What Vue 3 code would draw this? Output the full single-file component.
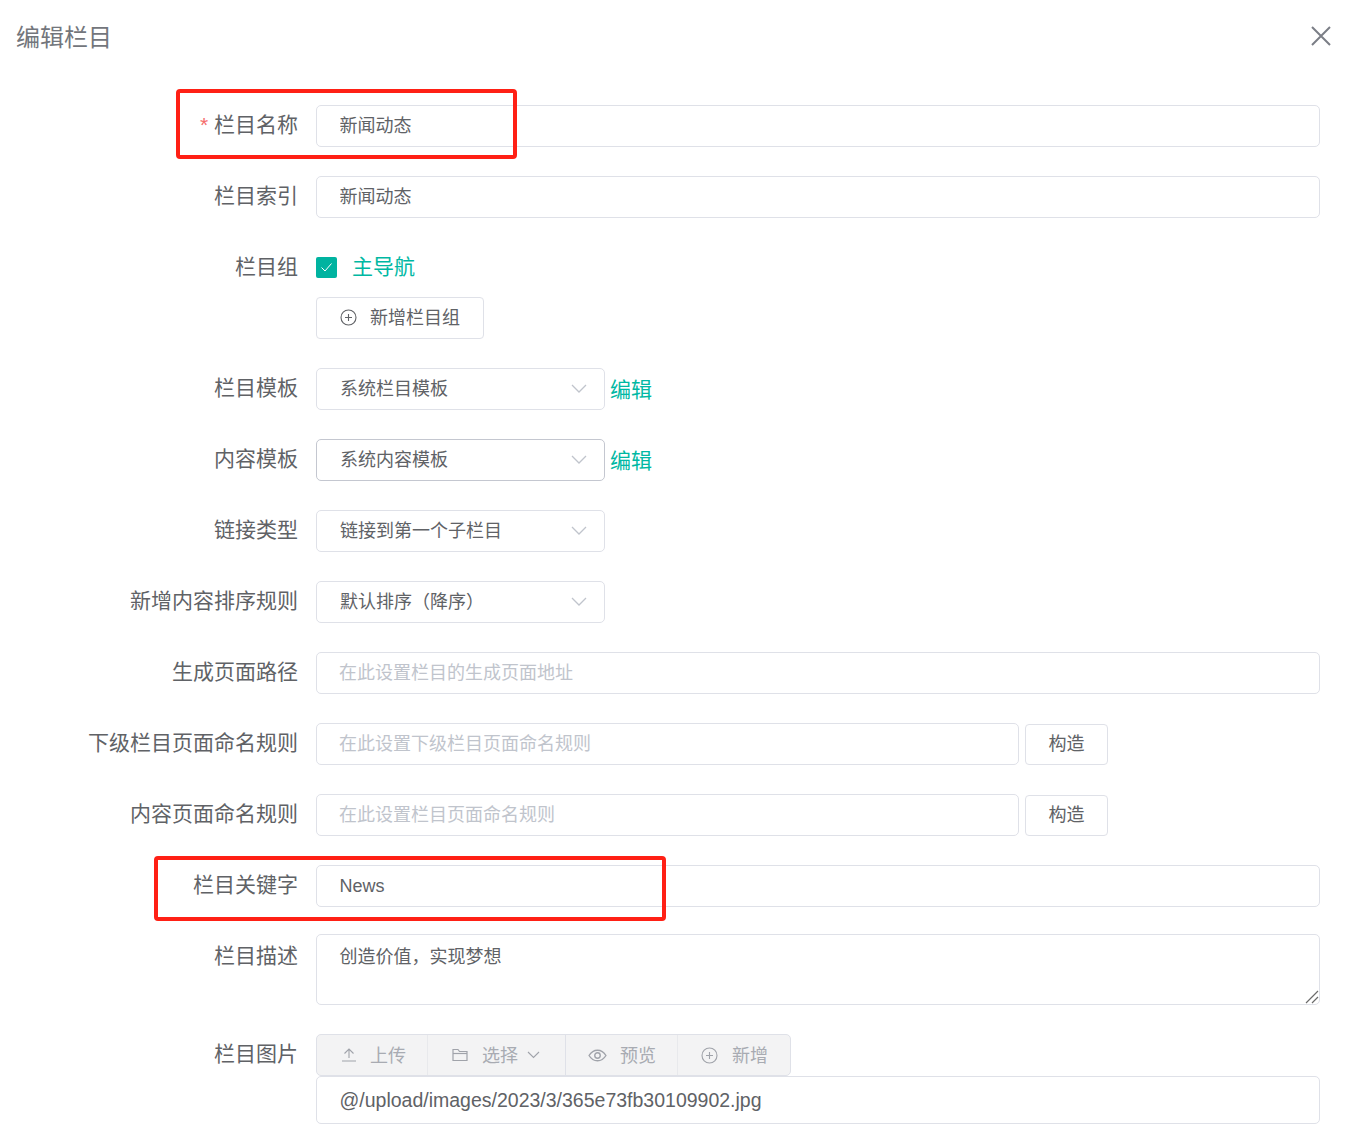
<script setup>
const pageRows = [
  { label: '新增内容排序规则', value: '默认排序（降序）' },
]
const ruleRows = [
  { label: '下级栏目页面命名规则', placeholder: '在此设置下级栏目页面命名规则' },
  { label: '内容页面命名规则', placeholder: '在此设置栏目页面命名规则' },
]
</script>

<template>
  <div class="dialog">
    <header class="head">
      <h1 class="title">编辑栏目</h1>
      <svg class="close" width="20" height="20" viewBox="0 0 20 20" fill="none">
        <path d="M1 1 19 19M19 1 1 19" stroke="#7b7e86" stroke-width="2" />
      </svg>
    </header>

    <form class="form">
      <div class="row">
        <div class="mark mark-name"></div>
        <label class="label"><span class="star">*</span> 栏目名称</label>
        <input class="input input-cjk" value="新闻动态" />
      </div>

      <div class="row">
        <label class="label">栏目索引</label>
        <input class="input input-cjk" value="新闻动态" />
      </div>

      <div class="row">
        <label class="label">栏目组</label>
        <div class="stack">
          <div class="check-line">
            <span class="check">
              <svg width="13" height="11" viewBox="0 0 13 11" fill="none">
                <path d="M1.5 5.5 5 9 11.5 1.5" stroke="#fff" stroke-width="1" />
              </svg>
            </span>
            <span class="check-text">主导航</span>
          </div>
          <button type="button" class="btn btn-add">
            <svg class="add-icon" width="17" height="17" viewBox="0 0 17 17" fill="none" stroke="#606266" stroke-width="1.1">
              <circle cx="8.5" cy="8.5" r="7.5" />
              <path d="M8.5 5v7M5 8.5h7" />
            </svg>
            <span class="lift">新增栏目组</span>
          </button>
        </div>
      </div>

      <div class="row">
        <label class="label">栏目模板</label>
        <div class="inline">
          <div class="select">
            <span class="lift">系统栏目模板</span>
            <svg class="chev" width="16" height="9" viewBox="0 0 16 9" fill="none"><path d="M1 1l7 7 7-7" stroke="#c0c4cc" stroke-width="1.3" /></svg>
          </div>
          <a class="edit">编辑</a>
        </div>
      </div>

      <div class="row">
        <label class="label">内容模板</label>
        <div class="inline">
          <div class="select select-hover">
            <span class="lift">系统内容模板</span>
            <svg class="chev" width="16" height="9" viewBox="0 0 16 9" fill="none"><path d="M1 1l7 7 7-7" stroke="#c0c4cc" stroke-width="1.3" /></svg>
          </div>
          <a class="edit">编辑</a>
        </div>
      </div>

      <div class="row">
        <label class="label">链接类型</label>
        <div class="inline">
          <div class="select">
            <span class="lift">链接到第一个子栏目</span>
            <svg class="chev" width="16" height="9" viewBox="0 0 16 9" fill="none"><path d="M1 1l7 7 7-7" stroke="#c0c4cc" stroke-width="1.3" /></svg>
          </div>
        </div>
      </div>

      <div v-for="r in pageRows" :key="r.label" class="row">
        <label class="label">{{ r.label }}</label>
        <div class="inline">
          <div class="select">
            <span class="lift">{{ r.value }}</span>
            <svg class="chev" width="16" height="9" viewBox="0 0 16 9" fill="none"><path d="M1 1l7 7 7-7" stroke="#c0c4cc" stroke-width="1.3" /></svg>
          </div>
        </div>
      </div>

      <div class="row">
        <label class="label">生成页面路径</label>
        <input class="input" placeholder="在此设置栏目的生成页面地址" />
      </div>

      <div v-for="r in ruleRows" :key="r.label" class="row">
        <label class="label">{{ r.label }}</label>
        <div class="inline inline-rule">
          <input class="input input-rule" :placeholder="r.placeholder" />
          <button type="button" class="btn btn-build"><span class="lift-b">构造</span></button>
        </div>
      </div>

      <div class="row row-tight">
        <div class="mark mark-key"></div>
        <label class="label">栏目关键字</label>
        <input class="input input-news" value="News" />
      </div>

      <div class="row">
        <label class="label label-top">栏目描述</label>
        <div class="area-wrap">
          <textarea class="area">创造价值，实现梦想</textarea>
          <svg class="grip" width="14" height="14" viewBox="0 0 14 14" fill="none" stroke="#6b6b6b" stroke-width="1.2">
            <path d="M1 13 13 1M7 13l6-6" />
          </svg>
        </div>
      </div>

      <div class="row row-last">
        <label class="label">栏目图片</label>
        <div class="stack stack-flush">
          <div class="group">
            <span class="seg seg-upload">
              <svg width="16" height="14" viewBox="0 0 16 14" fill="none" stroke="#a0a3aa" stroke-width="1.1">
                <path d="M8 10V1.500M3.500 5.500 8 1l4.500 4.500M1 13h14" />
              </svg>
              <span class="lift-s">上传</span>
            </span>
            <span class="seg seg-choose">
              <svg width="16" height="14" viewBox="0 0 16 14" fill="none" stroke="#a0a3aa" stroke-width="1.2">
                <path d="M1 12.500V1.500h5l1.500 2H15v9z" />
                <path d="M1 5.500h14" />
              </svg>
              <span class="lift-s">选择</span>
              <svg class="seg-chev" width="13" height="8" viewBox="0 0 13 8" fill="none" stroke="#a0a3aa" stroke-width="1.1"><path d="M1 1l5.500 5.500L12 1" /></svg>
            </span>
            <span class="seg seg-preview">
              <svg width="19" height="13" viewBox="0 0 18 12" fill="none" stroke="#a0a3aa" stroke-width="1.300">
                <path d="M1 6c2-3.300 4.700-5 8-5s6 1.700 8 5c-2 3.300-4.700 5-8 5S3 9.300 1 6z" />
                <circle cx="9" cy="6" r="2.600" />
              </svg>
              <span class="lift-s">预览</span>
            </span>
            <span class="seg seg-new">
              <svg width="17" height="17" viewBox="0 0 17 17" fill="none" stroke="#a0a3aa" stroke-width="1.1">
                <circle cx="8.500" cy="8.500" r="7.500" />
                <path d="M8.500 5v7M5 8.500h7" />
              </svg>
              <span class="lift-s">新增</span>
            </span>
          </div>
          <input class="input input-path" value="@/upload/images/2023/3/365e73fb30109902.jpg" />
        </div>
      </div>
    </form>
  </div>
</template>

<style>
html, body { margin: 0; background: #fff; }
</style>

<style scoped>
.dialog {
  width: 1346px;
  height: 1141px;
  overflow: hidden;
  background: #fff;
  font-family: "Liberation Sans", "Noto Sans CJK SC", sans-serif;
  color: #606266;
}
.head {
  height: 74px;
  display: flex;
  align-items: center;
  justify-content: space-between;
  padding: 0 16px 4px;
  box-sizing: border-box;
}
.title {
  margin: 0;
  font-size: 24px;
  font-weight: 400;
  color: #73767c;
}
.close { margin-right: -1px; margin-top: 2px; }
.form {
  padding: 31px 26px 0 0;
}
.row {
  position: relative;
  display: grid;
  grid-template-columns: 298px 1fr;
  column-gap: 18px;
  margin-bottom: 29px;
}
.row-tight { margin-bottom: 27px; }
.row-last { margin-bottom: 0; }
.label {
  font-size: 21px;
  line-height: 40px;
  text-align: right;
  white-space: nowrap;
  color: #606266;
}
.label-top { line-height: 44px; }
.star { color: #f56c6c; }
.lift { display: block; margin-top: -4px; }
.lift-b { display: block; margin-top: -5px; }
.lift-s { display: block; margin-top: -2px; }
.input, .select, .area {
  box-sizing: border-box;
  border: 1px solid #dfe1e8;
  border-radius: 5px;
  background: #fff;
  font-family: inherit;
  color: #606266;
  font-size: 18px;
}
.input {
  display: block;
  width: 100%;
  height: 42px;
  padding: 0 22px;
  outline: none;
}
.input-cjk { padding: 0 22.5px 4px; }
.input-news { padding: 0 22.5px; }
.input::placeholder { color: #c0c4cc; opacity: 1; }
.input-rule { width: 703px; flex: none; }
.input-path {
  height: 48px;
  font-size: 19.5px;
  padding: 0 22.5px;
}
.area-wrap { position: relative; height: 71px; }
.area {
  display: block;
  width: 100%;
  height: 71px;
  padding: 10px 22.5px;
  line-height: 24px;
  outline: none;
  resize: none;
}
.grip { position: absolute; right: 1px; bottom: 1px; }
.stack { display: flex; flex-direction: column; align-items: flex-start; }
.stack-flush { align-items: stretch; }
.check-line {
  height: 42px;
  display: flex;
  align-items: center;
  gap: 15px;
  margin-bottom: 8px;
}
.check {
  width: 21px;
  height: 21px;
  margin-top: -2px;
  border-radius: 2px;
  background: #00b3a0;
  display: flex;
  align-items: center;
  justify-content: center;
}
.check-text { font-size: 21px; color: #00b8a3; margin-top: -7px; }
.btn {
  box-sizing: border-box;
  border: 1px solid #dfe1e8;
  border-radius: 4px;
  background: #fff;
  font-family: inherit;
  font-size: 18px;
  color: #606266;
  height: 42px;
  display: flex;
  align-items: center;
  justify-content: center;
  padding: 0;
}
.btn-add { width: 168px; gap: 13px; }
.add-icon { margin-top: -1px; }
.btn-build { width: 83px; height: 41px; flex: none; align-self: flex-end; }
.inline { display: flex; align-items: center; gap: 6px; }
.select {
  width: 289px;
  height: 42px;
  display: flex;
  align-items: center;
  justify-content: space-between;
  padding: 0 17px 0 23px;
  flex: none;
}
.chev { margin-top: -2px; }
.select-hover { border-color: #c4c7d0; }
.edit { font-size: 21px; color: #00b8a3; margin-left: -1px; margin-top: -2px; }
.group {
  width: 475px;
  height: 42px;
  box-sizing: border-box;
  display: flex;
  border: 1px solid #dfe1e8;
  border-radius: 5px;
  background: #f3f3f4;
}
.seg {
  box-sizing: border-box;
  display: flex;
  align-items: center;
  font-size: 18px;
  color: #a8abb2;
  border-right: 1px solid #e8e9ec;
  flex: none;
}
.seg-upload { width: 111px; padding-left: 24px; gap: 13px; }
.seg-choose { width: 138px; padding-left: 24px; gap: 14px; border-right-color: #dfe1e8; }
.seg-chev { margin-left: -5px; }
.seg-preview { width: 112px; padding-left: 22px; gap: 13px; }
.seg-new { width: 112px; padding-left: 23px; gap: 14px; border-right: 0; }
.mark {
  position: absolute;
  box-sizing: border-box;
  border: 4px solid #ff2015;
  border-radius: 4px;
  pointer-events: none;
  z-index: 2;
}
.mark-name { left: 176px; top: -16px; width: 341px; height: 70px; }
.mark-key { left: 154px; top: -9px; width: 512px; height: 65px; }
</style>
